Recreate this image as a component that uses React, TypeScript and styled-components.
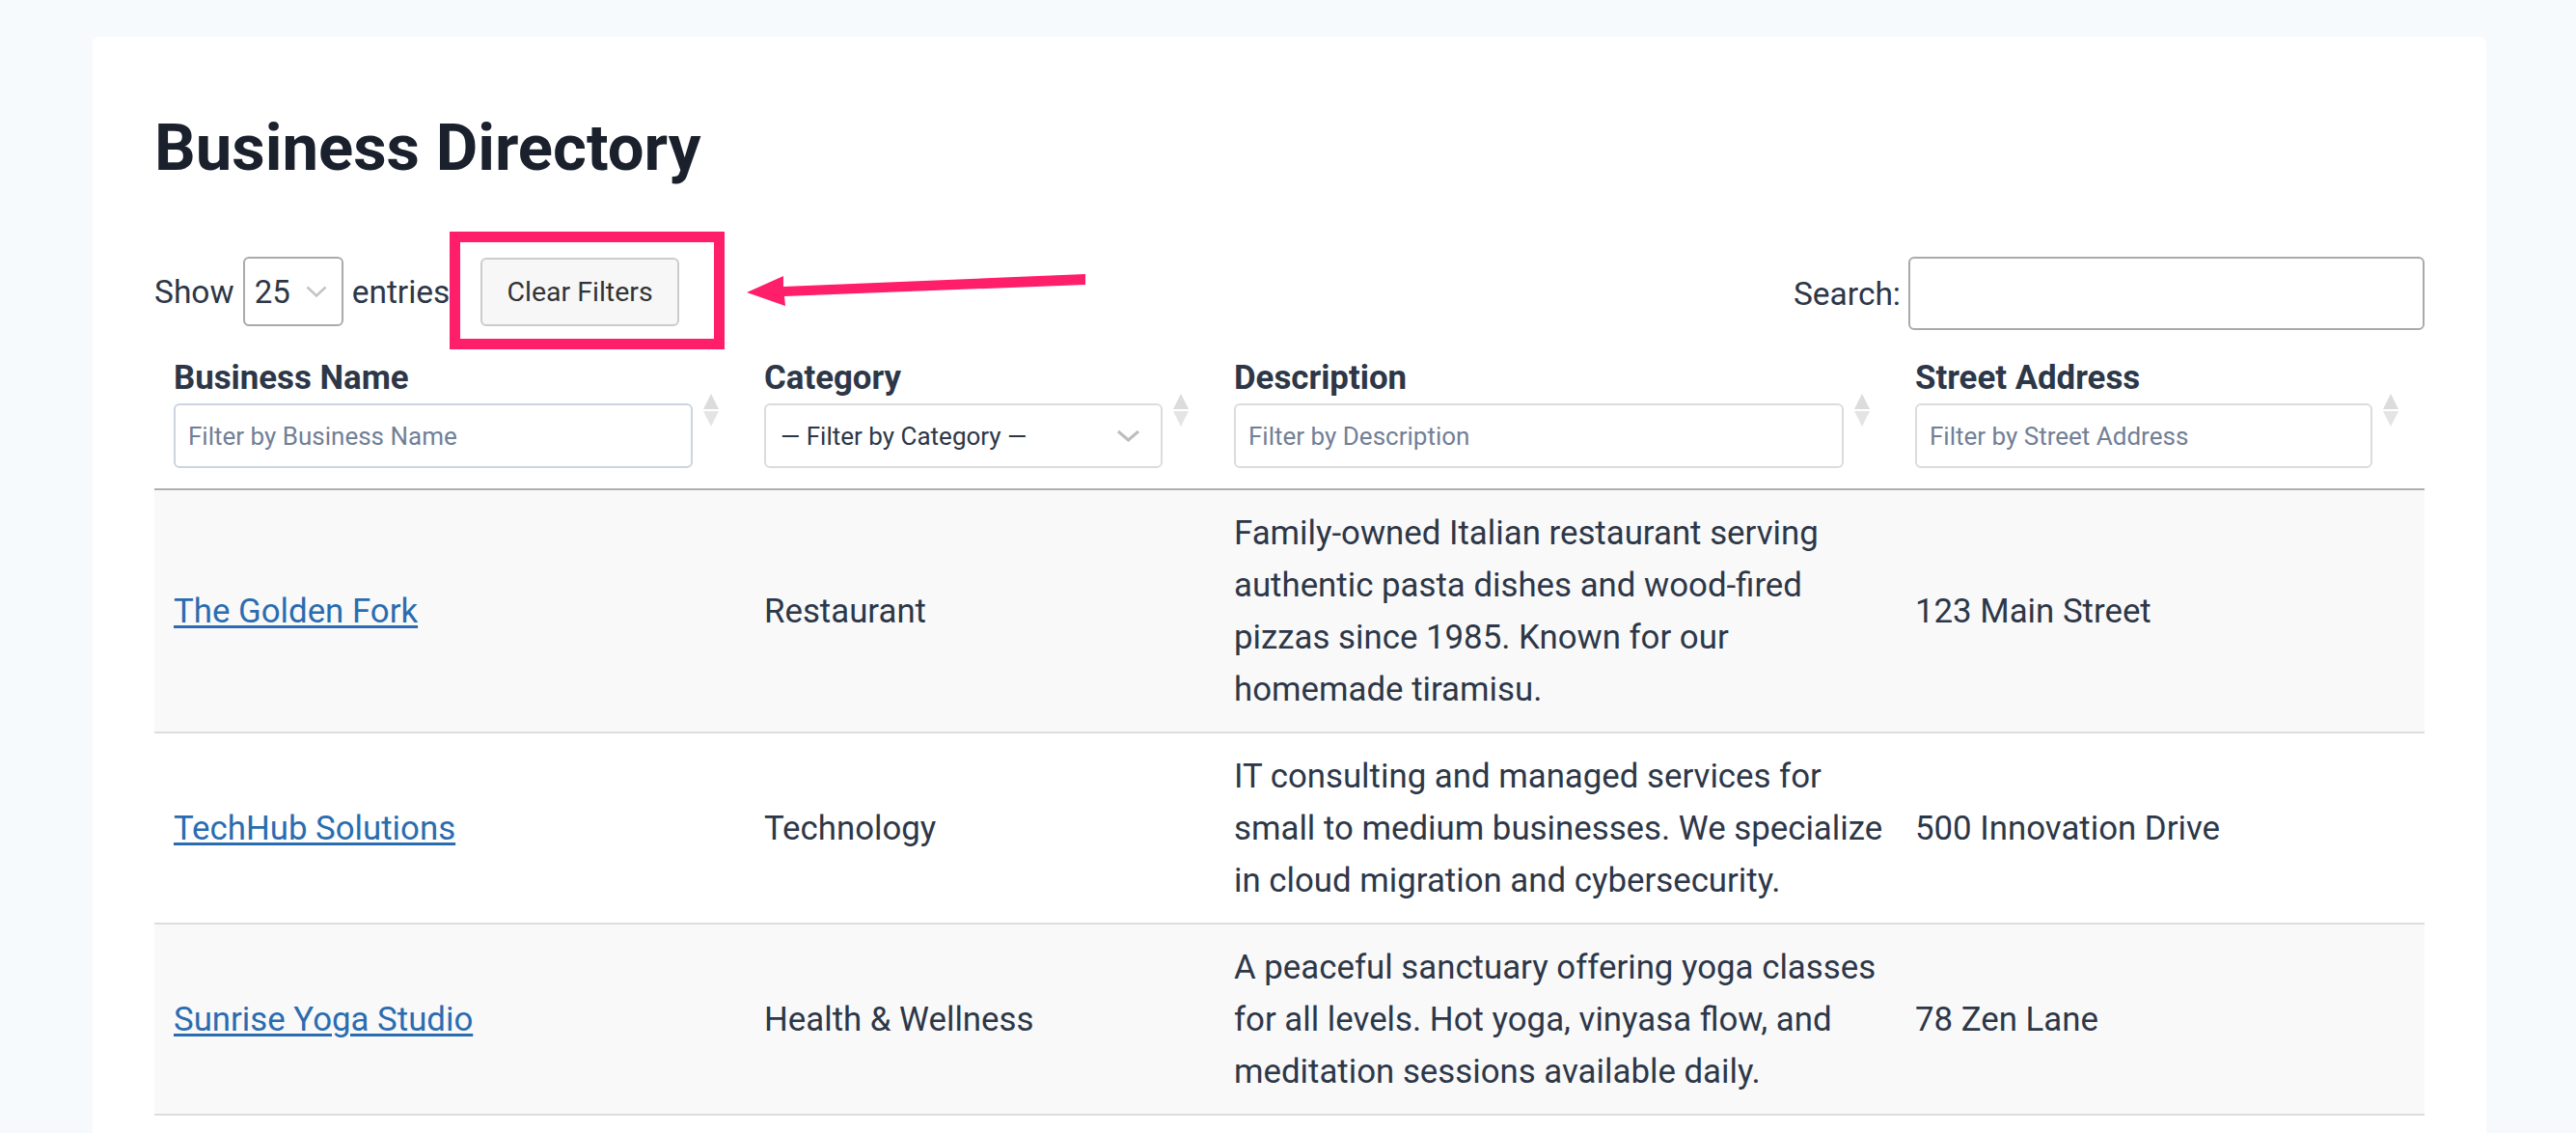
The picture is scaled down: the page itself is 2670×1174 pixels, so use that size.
import React from "react";
import styled, { createGlobalStyle } from "styled-components";

interface Business {
  name: string;
  category: string;
  description: string;
  address: string;
}

const businesses: Business[] = [
  {
    name: "The Golden Fork",
    category: "Restaurant",
    description:
      "Family-owned Italian restaurant serving authentic pasta dishes and wood-fired pizzas since 1985. Known for our homemade tiramisu.",
    address: "123 Main Street",
  },
  {
    name: "TechHub Solutions",
    category: "Technology",
    description:
      "IT consulting and managed services for small to medium businesses. We specialize in cloud migration and cybersecurity.",
    address: "500 Innovation Drive",
  },
  {
    name: "Sunrise Yoga Studio",
    category: "Health & Wellness",
    description:
      "A peaceful sanctuary offering yoga classes for all levels. Hot yoga, vinyasa flow, and meditation sessions available daily.",
    address: "78 Zen Lane",
  },
];

interface Column {
  key: string;
  label: string;
  width: number;
  filter: "text" | "select";
  placeholder: string;
  border: string;
}

const columns: Column[] = [
  { key: "name", label: "Business Name", width: 612, filter: "text", placeholder: "Filter by Business Name", border: "#cbd5e0" },
  { key: "category", label: "Category", width: 487, filter: "select", placeholder: "— Filter by Category —", border: "#dcdcdc" },
  { key: "description", label: "Description", width: 706, filter: "text", placeholder: "Filter by Description", border: "#dcdcdc" },
  { key: "address", label: "Street Address", width: 548, filter: "text", placeholder: "Filter by Street Address", border: "#dcdcdc" },
];

const GlobalStyle = createGlobalStyle`
  html, body {
    margin: 0;
    padding: 0;
    overflow: hidden;
  }
  body {
    background: #f7fafc;
    font-family: Roboto, "Liberation Sans", sans-serif;
    color: #2d3748;
  }
`;

const Card = styled.main`
  margin: 38px 93px 0 96px;
  padding: 75px 64px 0 64px;
  min-height: 1300px;
  background: #ffffff;
  border-radius: 8px 8px 0 0;
`;

const Title = styled.h1`
  margin: 0;
  font-size: 67px;
  line-height: 80px;
  font-weight: 700;
  color: #1a202c;
`;

const Toolbar = styled.div`
  display: flex;
  justify-content: space-between;
  align-items: flex-start;
  margin-top: 73px;
`;

const Control = styled.div`
  display: flex;
  align-items: center;
  height: ${(p: { $height: number }) => p.$height}px;
  font-size: 33.5px;
  color: #2d3748;
`;

const SelectBox = styled.div<{ $width: number; $height: number; $border: string; $size: number; $pad: number; $chevronRight: number }>`
  display: grid;
  align-items: center;
  box-sizing: border-box;
  width: ${(p) => p.$width}px;
  height: ${(p) => p.$height}px;
  border: 2px solid ${(p) => p.$border};
  border-radius: 6px;
  background: #fff;
  font-size: ${(p) => p.$size}px;
  font-weight: 400;
  color: #2d3748;

  & > * {
    grid-area: 1 / 1;
  }
  & > span {
    padding-left: ${(p) => p.$pad}px;
    white-space: nowrap;
  }
  & > svg {
    justify-self: end;
    margin-right: ${(p) => p.$chevronRight}px;
  }
`;

const LengthSelect = styled(SelectBox)`
  margin: 0 9px;
`;

const ClearWrap = styled.span`
  position: relative;
  display: inline-flex;
  margin-left: 32px;
`;

const ClearButton = styled.button`
  height: 71px;
  padding: 0 25px;
  box-sizing: border-box;
  border: 2px solid #cccccc;
  border-radius: 6px;
  background: #f7f7f7;
  font-family: Roboto, "Liberation Sans", sans-serif;
  font-size: 28.5px;
  color: #333333;
  cursor: pointer;
`;

const Highlight = styled.span`
  position: absolute;
  left: -32px;
  top: -27px;
  right: -47px;
  bottom: -24px;
  border: 11px solid #ff1e69;
  pointer-events: none;
`;

const Pointer = styled.svg`
  position: absolute;
  left: 276px;
  top: 16px;
  pointer-events: none;
`;

const SearchInput = styled.input`
  width: 535px;
  height: 76px;
  margin-left: 8px;
  box-sizing: border-box;
  border: 2px solid #aaaaaa;
  border-radius: 6px;
  padding: 0 12px;
  font-size: 30px;
  font-family: inherit;
  outline: none;
`;

const Table = styled.table`
  width: 100%;
  border-collapse: collapse;
  table-layout: fixed;
`;

const Col = styled.col<{ $width: number }>`
  width: ${(p) => p.$width}px;
`;

const HeadCell = styled.th`
  padding: 23px 27px 21px 20px;
  text-align: left;
  vertical-align: top;
  border-bottom: 2px solid #b0b0b0;
`;

const HeadLabel = styled.div`
  font-size: 34.8px;
  line-height: 52px;
  font-weight: 700;
  color: #2d3748;
`;

const FilterRow = styled.div`
  display: flex;
  align-items: flex-start;
  gap: 11px;
  margin-top: 1px;
`;

const FilterInput = styled.input<{ $border: string }>`
  flex: 1;
  min-width: 0;
  height: 67px;
  box-sizing: border-box;
  border: 2px solid ${(p) => p.$border};
  border-radius: 6px;
  padding: 0 13px;
  font-family: inherit;
  font-size: 26px;
  color: #2d3748;
  outline: none;

  &::placeholder {
    color: #718096;
  }
`;

const FilterSelect = styled(SelectBox)`
  flex: 1;
  min-width: 0;
`;

const SortIcon = styled.svg`
  flex: none;
  margin-top: -10px;
`;

const Row = styled.tr<{ $striped: boolean }>`
  background: ${(p) => (p.$striped ? "#f9f9f9" : "#ffffff")};
`;

const Cell = styled.td`
  padding: 17px 8px 17px 20px;
  font-size: 34.8px;
  line-height: 54px;
  color: #2d3748;
  vertical-align: middle;
  border-bottom: 2px solid #dddddd;
`;

const NameLink = styled.a`
  color: #2b6cb0;
  text-decoration: underline;
  text-decoration-thickness: 3px;
  text-underline-offset: 3px;
`;

const Chevron = ({ w, h, color, stroke }: { w: number; h: number; color: string; stroke: number }) => (
  <svg width={w} height={h} viewBox={`0 0 ${w} ${h}`}>
    <polyline
      points={`${stroke},${stroke} ${w / 2},${h - stroke} ${w - stroke},${stroke}`}
      fill="none"
      stroke={color}
      strokeWidth={stroke}
    />
  </svg>
);

const Sort = () => (
  <SortIcon width={16} height={34} viewBox="0 0 16 34">
    <polygon points="8,0 16,16 0,16" fill="#dcdcdc" />
    <polygon points="0,18 16,18 8,34" fill="#e4e4e4" />
  </SortIcon>
);

export default function App() {
  return (
    <>
      <GlobalStyle />
      <Card>
        <Title>Business Directory</Title>
        <Toolbar>
          <Control $height={72}>
            Show
            <LengthSelect $width={104} $height={72} $border="#aaaaaa" $size={33} $pad={10} $chevronRight={14}>
              <span>25</span>
              <Chevron w={24} h={14} color="#c4c4c4" stroke={2.5} />
            </LengthSelect>
            entries
            <ClearWrap>
              <ClearButton>Clear Filters</ClearButton>
              <Highlight />
              <Pointer width={352} height={36} viewBox="0 0 352 36">
                <polygon
                  points="0,20 38,3 38,14 351,1 351,12 39,24 40,34"
                  fill="#ff1e69"
                />
              </Pointer>
            </ClearWrap>
          </Control>
          <Control $height={76}>
            Search:
            <SearchInput type="search" />
          </Control>
        </Toolbar>
        <Table>
          <colgroup>
            {columns.map((c) => (
              <Col key={c.key} $width={c.width} />
            ))}
          </colgroup>
          <thead>
            <tr>
              {columns.map((c) => (
                <HeadCell key={c.key}>
                  <HeadLabel>{c.label}</HeadLabel>
                  <FilterRow>
                    {c.filter === "text" ? (
                      <FilterInput $border={c.border} placeholder={c.placeholder} />
                    ) : (
                      <FilterSelect $width={0} $height={67} $border={c.border} $size={26} $pad={15} $chevronRight={20}>
                        <span>{c.placeholder}</span>
                        <Chevron w={27} h={15} color="#bdbdbd" stroke={3} />
                      </FilterSelect>
                    )}
                    <Sort />
                  </FilterRow>
                </HeadCell>
              ))}
            </tr>
          </thead>
          <tbody>
            {businesses.map((b, i) => (
              <Row key={b.name} $striped={i % 2 === 0}>
                <Cell>
                  <NameLink href="#">{b.name}</NameLink>
                </Cell>
                <Cell>{b.category}</Cell>
                <Cell>{b.description}</Cell>
                <Cell>{b.address}</Cell>
              </Row>
            ))}
          </tbody>
        </Table>
      </Card>
    </>
  );
}
